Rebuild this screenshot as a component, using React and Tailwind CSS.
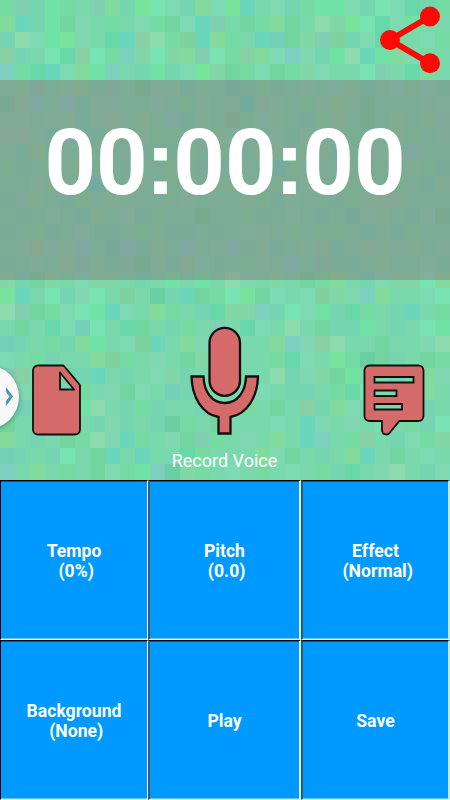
const FONT = "font-['Roboto','Liberation_Sans',sans-serif]";

const PALETTE = {
  a: '#76dba3', b: '#79d9ad', c: '#75d5b0', d: '#7edab2', e: '#81d8a6',
  f: '#82db9d', g: '#70e2a6', h: '#78e39b', i: '#82d7b3', j: '#74d0b6',
  k: '#80cfb0', l: '#88d1a5', m: '#69d8a8', n: '#78e4b4', o: '#72d49f',
  p: '#6ad6bc', q: '#7dd0c0', r: '#8edcae', s: '#7fd19d', t: '#6bcfa3',
};

const TILES = [
  'akcgabkfchndcfdhpbdcaggdcndmca',
  'fpcgoibabdaodpkboafobrehnmdgbb',
  'crdghibmplraspfabpjoekscdmabda',
  'lcbnmlnaqenefknalfdqicgrpgfdab',
  'qampdfgqbcgcdheoadoaedbbnkbmfb',
  'eekbefckboeecbbjcacbibdecbdedc',
  'olqbqciibbibaebeplebaefeobbbid',
  'eebeecelbfbqcebsadebcalbobebei',
  'llbcqccboeaabbfdbbdcibdacbeabi',
  'bcfcbabbbcbcebbabeebaecbbdaqbb',
  'acbabfbbcbbabccbdbpabbdbobceac',
  'bbeabcpacbbabbeabbebdbcabbabce',
  'ciebcabeebbaebbbeacebbcaellbbb',
  'bcbdbcebdcabbobbacbdbcbjdebcdo',
  'cbacbdccbabccbcbdebabaabcbcabb',
  'belieqbjqcebqbeqcecbelcbleiebi',
  'cbiblkeckoecldcbaebqbkccbebbdc',
  'ecoebdeebcbgbgbribeboafbcdeenf',
  'hpbncinbsbtcpoanhodbdseiqfbbdn',
  'rkoadngpdbfabcmeeqcndgcmabcpba',
  'bobmdjnbmobcabkbmdbrboccgbcbng',
  'jcbacfgbdspbfibabbfqilrbbobbir',
  'dbacbbfsabiboebibbamdbhatocboa',
  'klbbocpbcbdecbkabbrcieogbbcbfi',
  'qibdcabiodbjcaebbdbccbamndbcfb',
  'bjbcagrbcacbbcibaboblcfdbbbbcb',
  'obbabbcicbctabobbbdbpibibdbacn',
  'fbcboaripabiokabibfbpqbalbcdae',
  'jcbcnbopbpbbmabbbfdobcbfpbobdb',
  'qbfbabodagqteabdbabdbacmbirbcd',
];

function Mosaic() {
  return (
    <svg className="col-start-1 row-start-1 block" width="450" height="480" viewBox="0 0 450 480" shapeRendering="crispEdges" aria-hidden="true">
      {TILES.map((row, y) =>
        row.split('').map((key, x) => (
          <rect key={`${x}-${y}`} x={x * 15} y={y * 16} width="15" height="16" fill={PALETTE[key]} />
        ))
      )}
    </svg>
  );
}

function ShareIcon() {
  return (
    <svg className="block" width="62" height="75" viewBox="0 0 62 75" fill="#ff0808">
      <path d="M50 16.500 10 40 50 63.300" fill="none" stroke="#ff0808" strokeWidth="6" />
      <circle cx="50" cy="16.500" r="10" />
      <circle cx="10" cy="40" r="10" />
      <circle cx="50" cy="63.300" r="10" />
    </svg>
  );
}

const OUTLINE = { fill: '#d56a6a', stroke: '#101010', strokeLinejoin: 'round' };

function FileIcon() {
  return (
    <svg width="50" height="72" viewBox="0 0 50 72" {...OUTLINE} strokeWidth="1.8">
      <path fillRule="evenodd" d="M6 1.500H31.500L48 21V65.500A5 5 0 0 1 43 70.500H6A5 5 0 0 1 1 65.500V6.500A5 5 0 0 1 6 1.500ZM28 8.500V25.500H42Z" />
    </svg>
  );
}

function MicIcon() {
  return (
    <svg width="70" height="110" viewBox="0 0 70 110" {...OUTLINE} strokeWidth="2.3">
      <rect x="19.500" y="1.800" width="30.500" height="68" rx="15.250" />
      <path strokeLinejoin="miter" d="M1.500 50.500H13.500C14 66 22 77 34.700 77S55.500 66 56 50.500H68C67.500 71 57 88 40.500 91V107.500H28.500V91C12 88 2 71 1.500 50.500Z" />
    </svg>
  );
}

function CommentIcon() {
  return (
    <svg width="62" height="72" viewBox="0 0 62 72" {...OUTLINE} strokeLinejoin="miter" strokeWidth="1.8">
      <path fillRule="evenodd" d="M6 1.500H55.500A5 5 0 0 1 60.500 6.500V52A5 5 0 0 1 55.500 57H36.500L26.500 69Q25.500 70.500 23.500 70.500Q19 70.500 19 66V57H6A5 5 0 0 1 1.500 52V6.500A5 5 0 0 1 6 1.500ZM11.500 13V18.500H50.500V13ZM11.500 26.500V32H33.500V26.500ZM11.500 40V45.500H39V40Z" />
    </svg>
  );
}

function Colon() {
  return <span className="inline-block w-[25.7px] text-center font-['Liberation_Sans',sans-serif] leading-none"><span className="-mx-3">:</span></span>;
}

function ActionButton({ label, value, className }) {
  return (
    <button className={`flex flex-col items-center justify-center border-t border-b border-t-black border-b-white bg-[#0099ff] pt-[2px] text-[17.6px] leading-[20.5px] font-bold whitespace-pre text-white shadow-[inset_0_1px_#005a99,inset_0_-1px_#66c2ff] ${className}`}>
      <span>{label}</span>
      {value && <span>{` ${value}`}</span>}
    </button>
  );
}

const LEFT = 'border-l border-r border-l-black border-r-white';
const MIDDLE = 'border-l-2 border-r-2 border-l-[#405b70] border-r-[#d4efec]';
const RIGHT = 'border-l-2 border-r-2 border-l-[#315e57] border-r-[#c4e9d9]';

export default function App() {
  return (
    <main className={`h-[800px] w-[450px] overflow-hidden bg-white ${FONT}`}>
      <section className="grid h-[480px] overflow-hidden">
        <Mosaic />
        <div className="z-10 col-start-1 row-start-1 flex min-w-0 flex-col">
          <header className="flex h-20 items-start justify-end pr-[8px]">
            <button aria-label="Share"><ShareIcon /></button>
          </header>
          <div className="flex h-[200px] justify-center bg-[#808080]/50 pt-[31px]">
            <time className="text-[90px] leading-[106px] font-bold whitespace-nowrap text-white">00<Colon />00<Colon />00</time>
          </div>
          <div className="flex h-[165px] items-start">
            <button aria-label="Open side menu" className="-ml-[45px] mt-[85px] flex size-16 items-center justify-end rounded-full bg-[#f8f8f8] pr-[5px] shadow-[0_1px_5px_#315e5799]">
              <svg width="9" height="20" viewBox="0 0 9 20" fill="#4497b9"><path d="M1 0 8 9.500 1 19V14L4.500 9.500 1 5Z" /></svg>
            </button>
            <button aria-label="Files" className="mt-[84px] ml-[13px]"><FileIcon /></button>
            <button aria-label="Record" className="mt-[46px] ml-[108px]"><MicIcon /></button>
            <button aria-label="Messages" className="mt-[84px] ml-[103px]"><CommentIcon /></button>
          </div>
          <p className="pt-[5px] pr-px text-center text-[18px] leading-[22px] text-white">Record Voice</p>
        </div>
      </section>
      <section className="grid h-80 grid-cols-[148px_153px_149px] grid-rows-2">
        <ActionButton label="Tempo" value="(0%)" className={LEFT} />
        <ActionButton label="Pitch" value="(0.0)" className={MIDDLE} />
        <ActionButton label="Effect" value="(Normal)" className={RIGHT} />
        <ActionButton label="Background" value="(None)" className={LEFT} />
        <ActionButton label="Play" className={MIDDLE} />
        <ActionButton label="Save" className={RIGHT} />
      </section>
    </main>
  );
}
